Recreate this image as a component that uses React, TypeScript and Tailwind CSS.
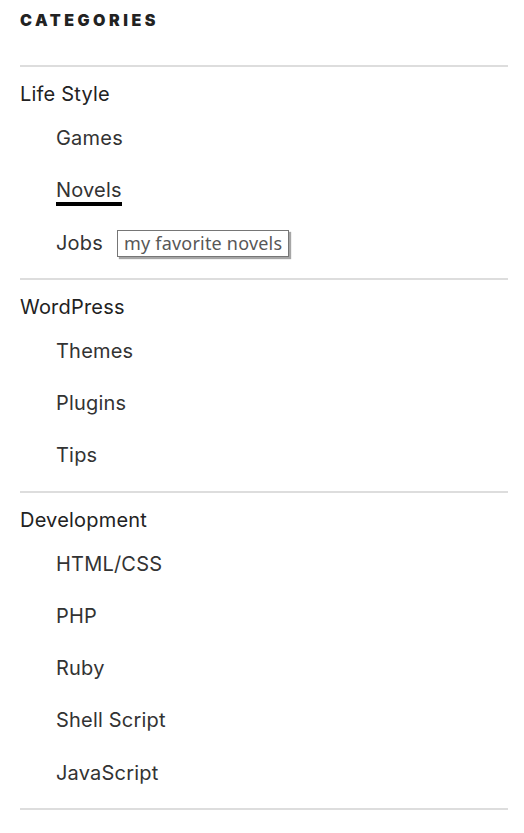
import React from "react";

const groups: { label: string; items: string[] }[] = [
  { label: "Life Style", items: ["Games", "Novels", "Jobs"] },
  { label: "WordPress", items: ["Themes", "Plugins", "Tips"] },
  { label: "Development", items: ["HTML/CSS", "PHP", "Ruby", "Shell Script", "JavaScript"] },
];

export default function App() {
  return (
    <div
      className="w-[524px] min-h-[833px] bg-white pl-[20px] pr-[16px] pt-[8px]"
      style={{ fontFamily: "Inter, 'Noto Sans', sans-serif" }}
    >
      <h2 className="text-[16px] leading-[24px] font-black uppercase tracking-[0.22em] text-[#222] mb-[33px]">
        Categories
      </h2>
      <ul>
        {groups.map((g, gi) => (
          <li
            key={g.label}
            className={`border-t-2 border-[#ddd] pt-[12px] pb-[9px] ${gi === groups.length - 1 ? "border-b-2" : ""}`}
          >
            <div className="text-[20px] leading-[30px] tracking-[0.01em] text-[#222]">{g.label}</div>
            <ul className="mt-[3px] pl-[36px]">
              {g.items.map((it) => (
                <li key={it} className="h-[52.25px] flex items-center text-[20px] leading-[30px] tracking-[0.01em] text-[#333]">
                  {it === "Novels" ? (
                    <span className="relative leading-[24px] shadow-[0_4px_0_#000]">{it}</span>
                  ) : it === "Jobs" ? (
                    <span className="relative">
                      {it}
                      <span
                        className="absolute left-[61px] top-[2px] whitespace-nowrap border border-[#767676] bg-white px-[6px] text-[18px] leading-[25px] text-[#575757] shadow-[2px_2px_1px_rgba(0,0,0,0.35)]"
                        style={{ fontFamily: "'Noto Sans', sans-serif" }}
                      >
                        my favorite novels
                      </span>
                    </span>
                  ) : (
                    <span>{it}</span>
                  )}
                </li>
              ))}
            </ul>
          </li>
        ))}
      </ul>
    </div>
  );
}
